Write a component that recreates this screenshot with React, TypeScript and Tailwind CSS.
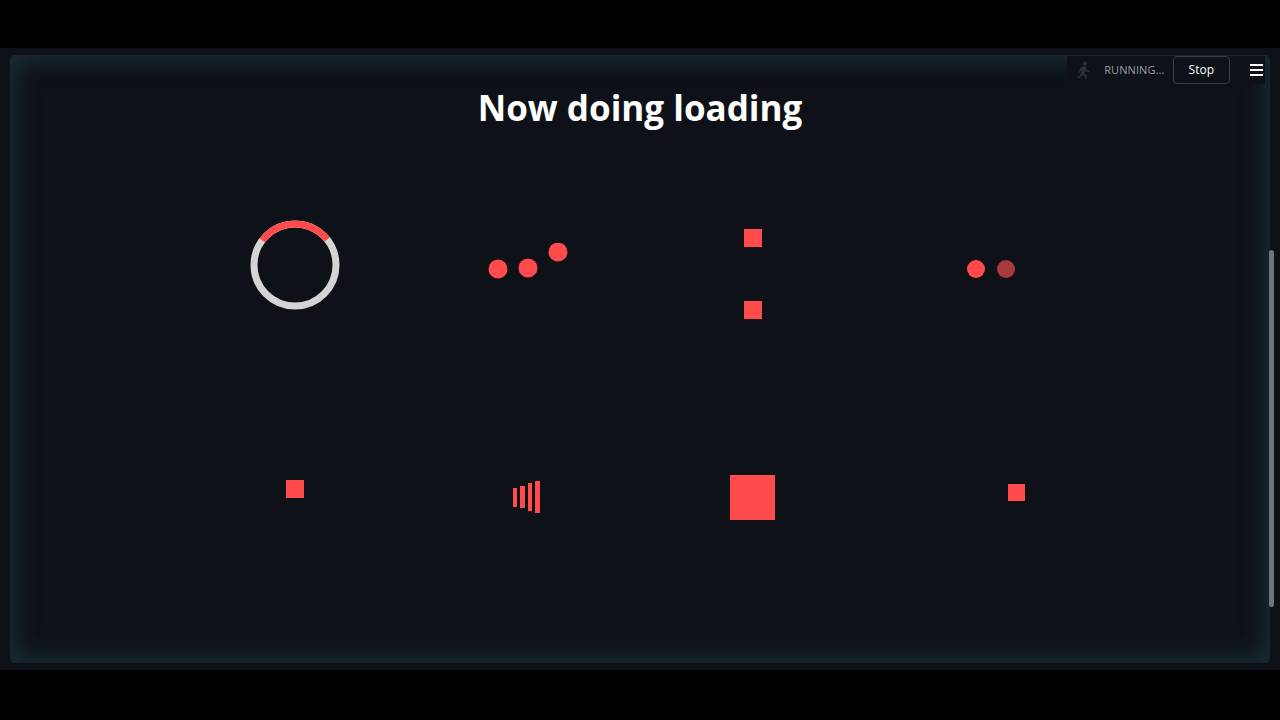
import React from "react";

const RED = "#ff4b4b";

function Spinner() {
  // ring with a red arc on top
  const r = 41;
  const c = 2 * Math.PI * r;
  return (
    <svg width="92" height="92" viewBox="0 0 92 92">
      <circle cx="46" cy="46" r={r} fill="none" stroke="#d4d4d4" strokeWidth="7" />
      <circle
        cx="46"
        cy="46"
        r={r}
        fill="none"
        stroke={RED}
        strokeWidth="7"
        strokeDasharray={`${c * 0.29} ${c}`}
        transform="rotate(-143 46 46)"
      />
    </svg>
  );
}

function Dots() {
  return (
    <svg width="80" height="36" viewBox="0 0 80 36">
      <circle cx="10" cy="26" r="9.5" fill={RED} />
      <circle cx="40" cy="25" r="9.5" fill={RED} />
      <circle cx="70" cy="9" r="9.5" fill={RED} />
    </svg>
  );
}

function Squares() {
  return (
    <div className="flex flex-col gap-[54px]">
      <div className="w-[18px] h-[18px] bg-[#ff4b4b]" />
      <div className="w-[18px] h-[18px] bg-[#ff4b4b]" />
    </div>
  );
}

function TwoDots() {
  return (
    <div className="flex gap-[12px]">
      <div className="w-[18px] h-[18px] rounded-full bg-[#ff4b4b]" />
      <div className="w-[18px] h-[18px] rounded-full bg-[#a8393c]" />
    </div>
  );
}

function Bars() {
  return (
    <div className="flex items-center gap-[3px]">
      <div className="w-[4px] h-[19px] bg-[#ff4b4b]" />
      <div className="w-[5px] h-[22px] bg-[#ff4b4b]" />
      <div className="w-[4px] h-[28px] bg-[#ff4b4b]" />
      <div className="w-[5px] h-[32px] bg-[#ff4b4b]" />
    </div>
  );
}

function RunningIcon() {
  return (
    <svg width="16" height="18" viewBox="0 0 16 18" fill="#2c3038">
      <circle cx="10" cy="2.5" r="2" />
      <path d="M6 6l4-1 2 4 3 1-1 1.5-3.5-1.2-1 2.5 2.5 2-1 4-1.5-.3.7-3-3-2-1.5 3-3 1-.5-1.5 2.5-1 2-5.5-1.5.5-1 2.5-1.5-.6z" />
    </svg>
  );
}

export default function App() {
  return (
    <div className="w-[1280px] h-[720px] flex flex-col bg-black overflow-hidden" style={{ fontFamily: '"Open Sans", "Noto Sans", sans-serif' }}>
      <div className="h-[48px] shrink-0 bg-black" />
      <div className="h-[622px] shrink-0 bg-[#0e1117] px-[10px] pt-[7px] pb-[7px] relative">
        <div className="h-full rounded-[4px] border border-[#16262b] shadow-[inset_0_0_22px_6px_rgba(34,72,82,0.5)] flex flex-col relative">
          {/* header */}
          <div className="absolute right-[4px] top-0 h-[28px] flex items-center bg-[#0e1117]">
            <div className="flex items-center gap-[13px] pl-[8px]">
              <RunningIcon />
              <span className="text-[11px] tracking-[0.1px] text-[#9a9ea6]">RUNNING...</span>
            </div>
            <button className="ml-[8px] h-[28px] px-[15px] rounded-[4px] border border-[#3a3d45] text-[12px] text-white bg-[#0e1117]">
              Stop
            </button>
            <div className="ml-[20px] mr-[2px] flex flex-col gap-[3px]">
              <div className="w-[13px] h-[2px] bg-white" />
              <div className="w-[13px] h-[2px] bg-white" />
              <div className="w-[13px] h-[2px] bg-white" />
            </div>
          </div>

          <h1 className="mt-[28px] text-center text-white text-[35px] font-bold leading-[48px]">Now doing loading</h1>

          <div className="mt-[18px] ml-[167px] w-[928px] grid grid-cols-4">
            <div className="h-[230px] flex items-center justify-center">
              <div className="ml-[2px]"><Spinner /></div>
            </div>
            <div className="h-[230px] flex items-center justify-center">
              <div className="ml-[4px] mb-[9px]"><Dots /></div>
            </div>
            <div className="h-[230px] flex items-center justify-center">
              <div className="mr-[10px] mt-[18px]"><Squares /></div>
            </div>
            <div className="h-[230px] flex items-center justify-center">
              <div className="ml-[2px] mt-[8px]"><TwoDots /></div>
            </div>

            <div className="h-[230px] flex items-center justify-center">
              <div className="ml-[2px] mb-[12px] w-[18px] h-[18px] bg-[#ff4b4b]" />
            </div>
            <div className="h-[230px] flex items-center justify-center">
              <div className="mt-[4px]"><Bars /></div>
            </div>
            <div className="h-[230px] flex items-center justify-center">
              <div className="mr-[11px] mt-[5px] w-[45px] h-[45px] bg-[#ff4b4b]" />
            </div>
            <div className="h-[230px] flex items-center justify-center">
              <div className="ml-[53px] mb-[5px] w-[17px] h-[17px] bg-[#ff4b4b]" />
            </div>
          </div>
        </div>
        {/* scrollbar */}
        <div className="absolute right-[6px] top-[202px] w-[5px] h-[357px] rounded-full bg-[#6c777d]" />
      </div>
      <div className="flex-1 bg-black" />
    </div>
  );
}
